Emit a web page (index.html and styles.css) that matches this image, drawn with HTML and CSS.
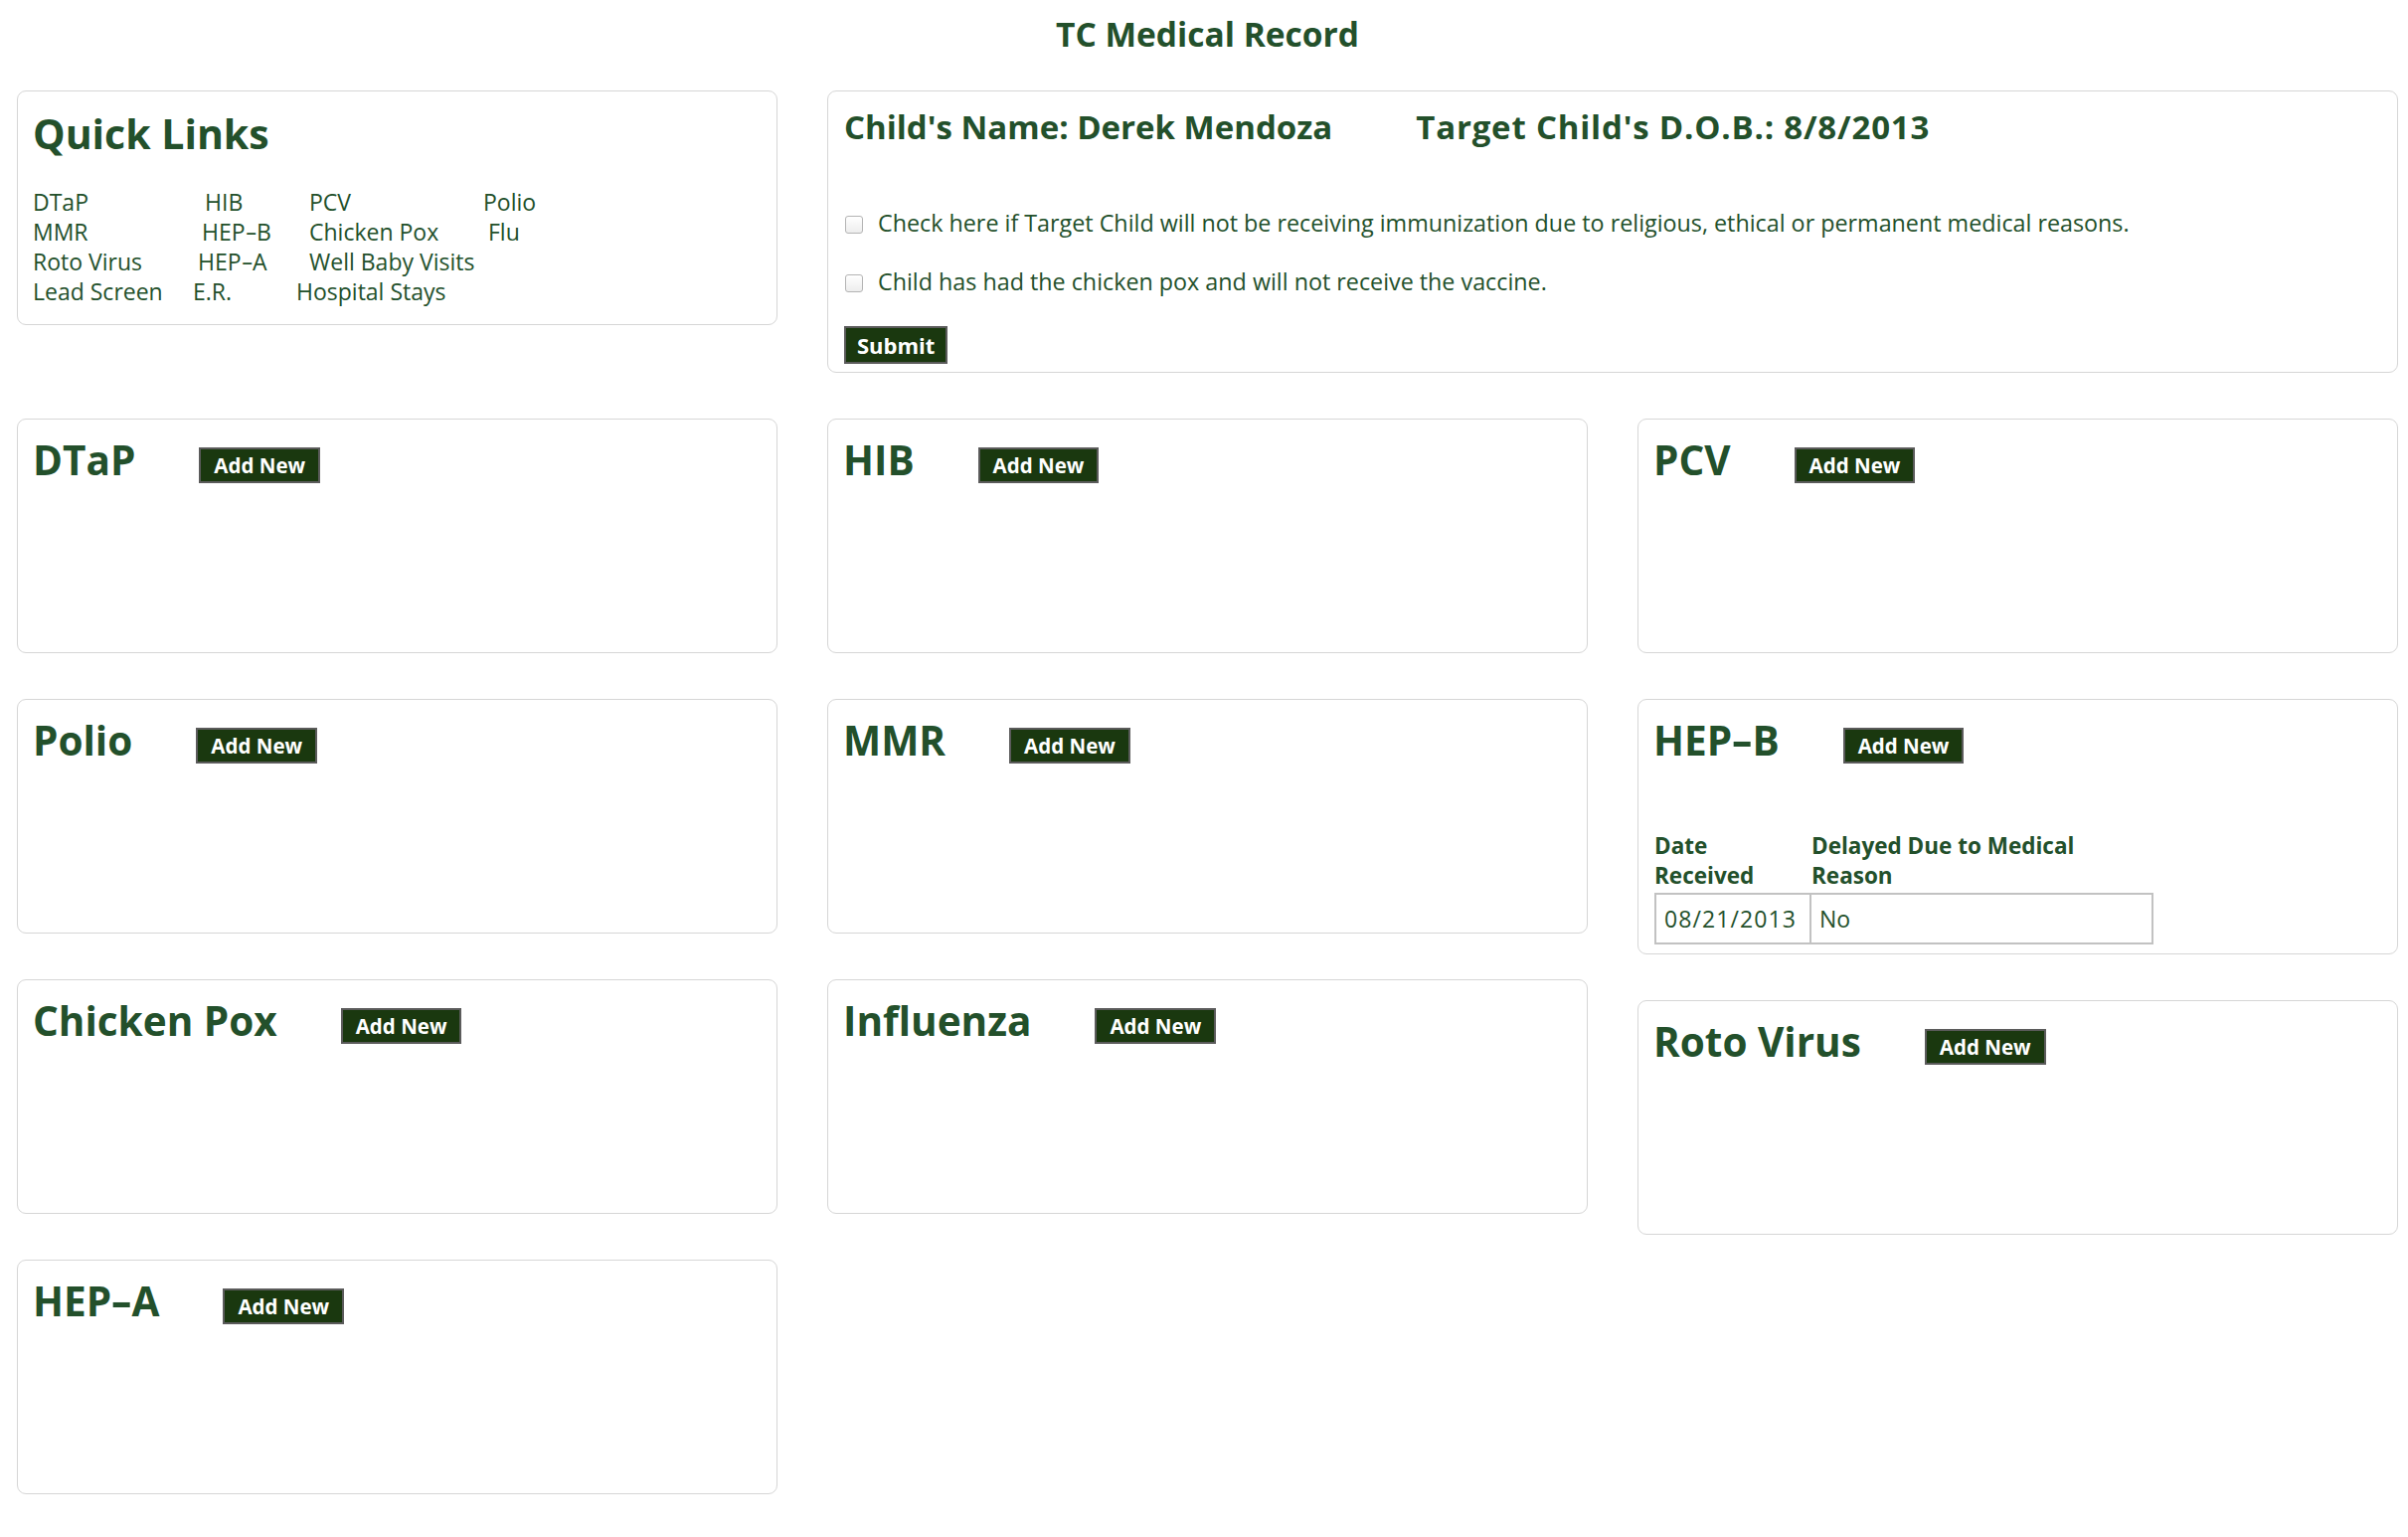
FILE: index.html
```html
<!DOCTYPE html>
<html lang="en">
<head>
<meta charset="utf-8">
<title>TC Medical Record</title>
<link rel="stylesheet" href="styles.css">
</head>
<body>
<div class="page">
  <h1 class="title">TC Medical Record</h1>

  <div class="top">
    <section class="box quick">
      <h2 class="quick-title">Quick Links</h2>
      <div class="ql">
        <div class="ql-row r1"><a href="#dtap">DTaP</a><a href="#hib">HIB</a><a href="#pcv">PCV</a><a href="#polio">Polio</a></div>
        <div class="ql-row r2"><a href="#mmr">MMR</a><a href="#hepb">HEP<span class="dash">-</span>B</a><a href="#pox">Chicken Pox</a><a href="#flu">Flu</a></div>
        <div class="ql-row r3"><a href="#roto">Roto Virus</a><a href="#hepa">HEP<span class="dash">-</span>A</a><a href="#wbv">Well Baby Visits</a></div>
        <div class="ql-row r4"><a href="#lead">Lead Screen</a><a href="#er">E.R.</a><a href="#hosp">Hospital Stays</a></div>
      </div>
    </section>

    <section class="box child">
      <h2 class="child-title"><span>Child's Name: Derek Mendoza</span><span class="dob">Target Child's D.O.B.: 8/8/2013</span></h2>
      <label class="check first"><input type="checkbox"><span>Check here if Target Child will not be receiving immunization due to religious, ethical or permanent medical reasons.</span></label>
      <label class="check"><input type="checkbox"><span>Child has had the chicken pox and will not receive the vaccine.</span></label>
      <button class="btn submit" type="button">Submit</button>
    </section>
  </div>

  <div class="cards">
    <div class="col">
      <section class="box card" id="dtap"><div class="card-head"><h2>DTaP</h2><button class="btn add" type="button">Add New</button></div></section>
      <section class="box card" id="polio"><div class="card-head"><h2>Polio</h2><button class="btn add" type="button">Add New</button></div></section>
      <section class="box card" id="pox"><div class="card-head"><h2>Chicken Pox</h2><button class="btn add" type="button">Add New</button></div></section>
      <section class="box card" id="hepa"><div class="card-head"><h2>HEP<span class="dash">-</span>A</h2><button class="btn add" type="button">Add New</button></div></section>
    </div>
    <div class="col">
      <section class="box card" id="hib"><div class="card-head"><h2>HIB</h2><button class="btn add" type="button">Add New</button></div></section>
      <section class="box card" id="mmr"><div class="card-head"><h2>MMR</h2><button class="btn add" type="button">Add New</button></div></section>
      <section class="box card" id="flu"><div class="card-head"><h2>Influenza</h2><button class="btn add" type="button">Add New</button></div></section>
    </div>
    <div class="col">
      <section class="box card" id="pcv"><div class="card-head"><h2>PCV</h2><button class="btn add" type="button">Add New</button></div></section>
      <section class="box card" id="hepb">
        <div class="card-head"><h2>HEP<span class="dash">-</span>B</h2><button class="btn add" type="button">Add New</button></div>
        <table class="records">
          <colgroup><col class="c1"><col class="c2"></colgroup>
          <thead><tr><th>Date<br>Received</th><th>Delayed Due to Medical<br>Reason</th></tr></thead>
          <tbody><tr><td class="date">08/21/2013</td><td>No</td></tr></tbody>
        </table>
      </section>
      <section class="box card" id="roto"><div class="card-head"><h2>Roto Virus</h2><button class="btn add" type="button">Add New</button></div></section>
    </div>
  </div>
</div>
</body>
</html>
```

FILE: styles.css
```css
* { box-sizing: border-box; }

html, body {
  margin: 0;
  padding: 0;
  background: #ffffff;
}

body {
  font-family: "Open Sans", "DejaVu Sans", sans-serif;
  font-size: 23px;
  color: #23502b;
}

.page {
  margin-left: 17px;
  width: 2395px;
  padding-bottom: 40px;
}

.title {
  margin: 12px 0 35px;
  font-size: 33.5px;
  line-height: 44px;
  font-weight: 700;
  text-align: center;
  color: #23502b;
}

.box {
  background: #fff;
  border: 1px solid #d6d6d6;
  border-radius: 9px;
}

.top {
  display: grid;
  grid-template-columns: 765px 1580px;
  column-gap: 50px;
  align-items: start;
}

.dash {
  display: inline-block;
  padding: 0 0.09em;
  transform: scaleX(1.6);
}

/* Quick links */
.quick {
  min-height: 236px;
  padding: 14px 15px 0;
}

.quick-title {
  margin: 0;
  font-size: 41px;
  line-height: 57px;
  font-weight: 700;
}

.ql {
  margin-top: 25px;
}

.ql-row {
  display: grid;
  line-height: 30px;
  white-space: nowrap;
}

.ql-row a {
  color: #23502b;
  text-decoration: none;
}

.r1 { grid-template-columns: 173px 105px 175px auto; }
.r2 { grid-template-columns: 170px 108px 180px auto; }
.r3 { grid-template-columns: 166px 112px auto; }
.r4 { grid-template-columns: 161px 104px auto; }

/* Child box */
.child {
  padding: 14px 16px 8px;
}

.child-title {
  margin: 0;
  display: flex;
  font-size: 33px;
  line-height: 44px;
  font-weight: 700;
}

.child-title .dob {
  margin-left: 84px;
  letter-spacing: 0.8px;
}

.check {
  display: flex;
  align-items: flex-start;
  font-size: 23.3px;
  line-height: 30px;
  margin-top: 29px;
}

.check.first {
  margin-top: 59px;
}

.check input {
  appearance: none;
  -webkit-appearance: none;
  width: 18px;
  height: 18px;
  margin: 8px 15px 0 1px;
  border: 1px solid #b4b4b4;
  border-radius: 3px;
  background: linear-gradient(#ffffff, #ededed);
  flex: none;
}

/* Buttons */
.btn {
  display: inline-block;
  font-family: "Open Sans", "DejaVu Sans", sans-serif;
  font-weight: 700;
  color: #ffffff;
  background: #1a380f;
  border: 2px solid #5b5b5b;
  border-radius: 0;
  margin: 0;
  cursor: pointer;
}

.submit {
  display: block;
  margin-top: 30px;
  height: 38px;
  padding: 0 11px;
  font-size: 22px;
  line-height: 34px;
}

.add {
  flex: none;
  height: 36px;
  padding: 0 13px;
  font-size: 20.5px;
  line-height: 32px;
  margin: 14px 0 0 64px;
}

/* Cards */
.cards {
  margin-top: 46px;
  display: grid;
  grid-template-columns: repeat(3, 765px);
  column-gap: 50px;
  align-items: start;
}

.col {
  display: flex;
  flex-direction: column;
  gap: 46px;
}

.card {
  min-height: 236px;
  padding: 14px 15px 9px;
}

.card-head {
  display: flex;
  align-items: flex-start;
}

.card-head h2 {
  margin: 0;
  font-size: 40.5px;
  line-height: 54px;
  font-weight: 700;
}

/* Records table */
.records {
  margin-top: 64px;
  margin-left: 1px;
  width: 502px;
  table-layout: fixed;
  border-collapse: separate;
  border-spacing: 0;
}

.records .c1 { width: 158px; }
.records .c2 { width: 344px; }

.records th {
  padding: 0 0 2px;
  text-align: left;
  vertical-align: bottom;
  font-size: 22.5px;
  line-height: 30px;
  font-weight: 700;
}

.records td {
  padding: 9px 8px;
  line-height: 30px;
  font-size: 23px;
  border: 2px solid #c2c2c2;
}

.records td.date {
  letter-spacing: 1.1px;
}

.records td + td {
  border-left: none;
}
```
